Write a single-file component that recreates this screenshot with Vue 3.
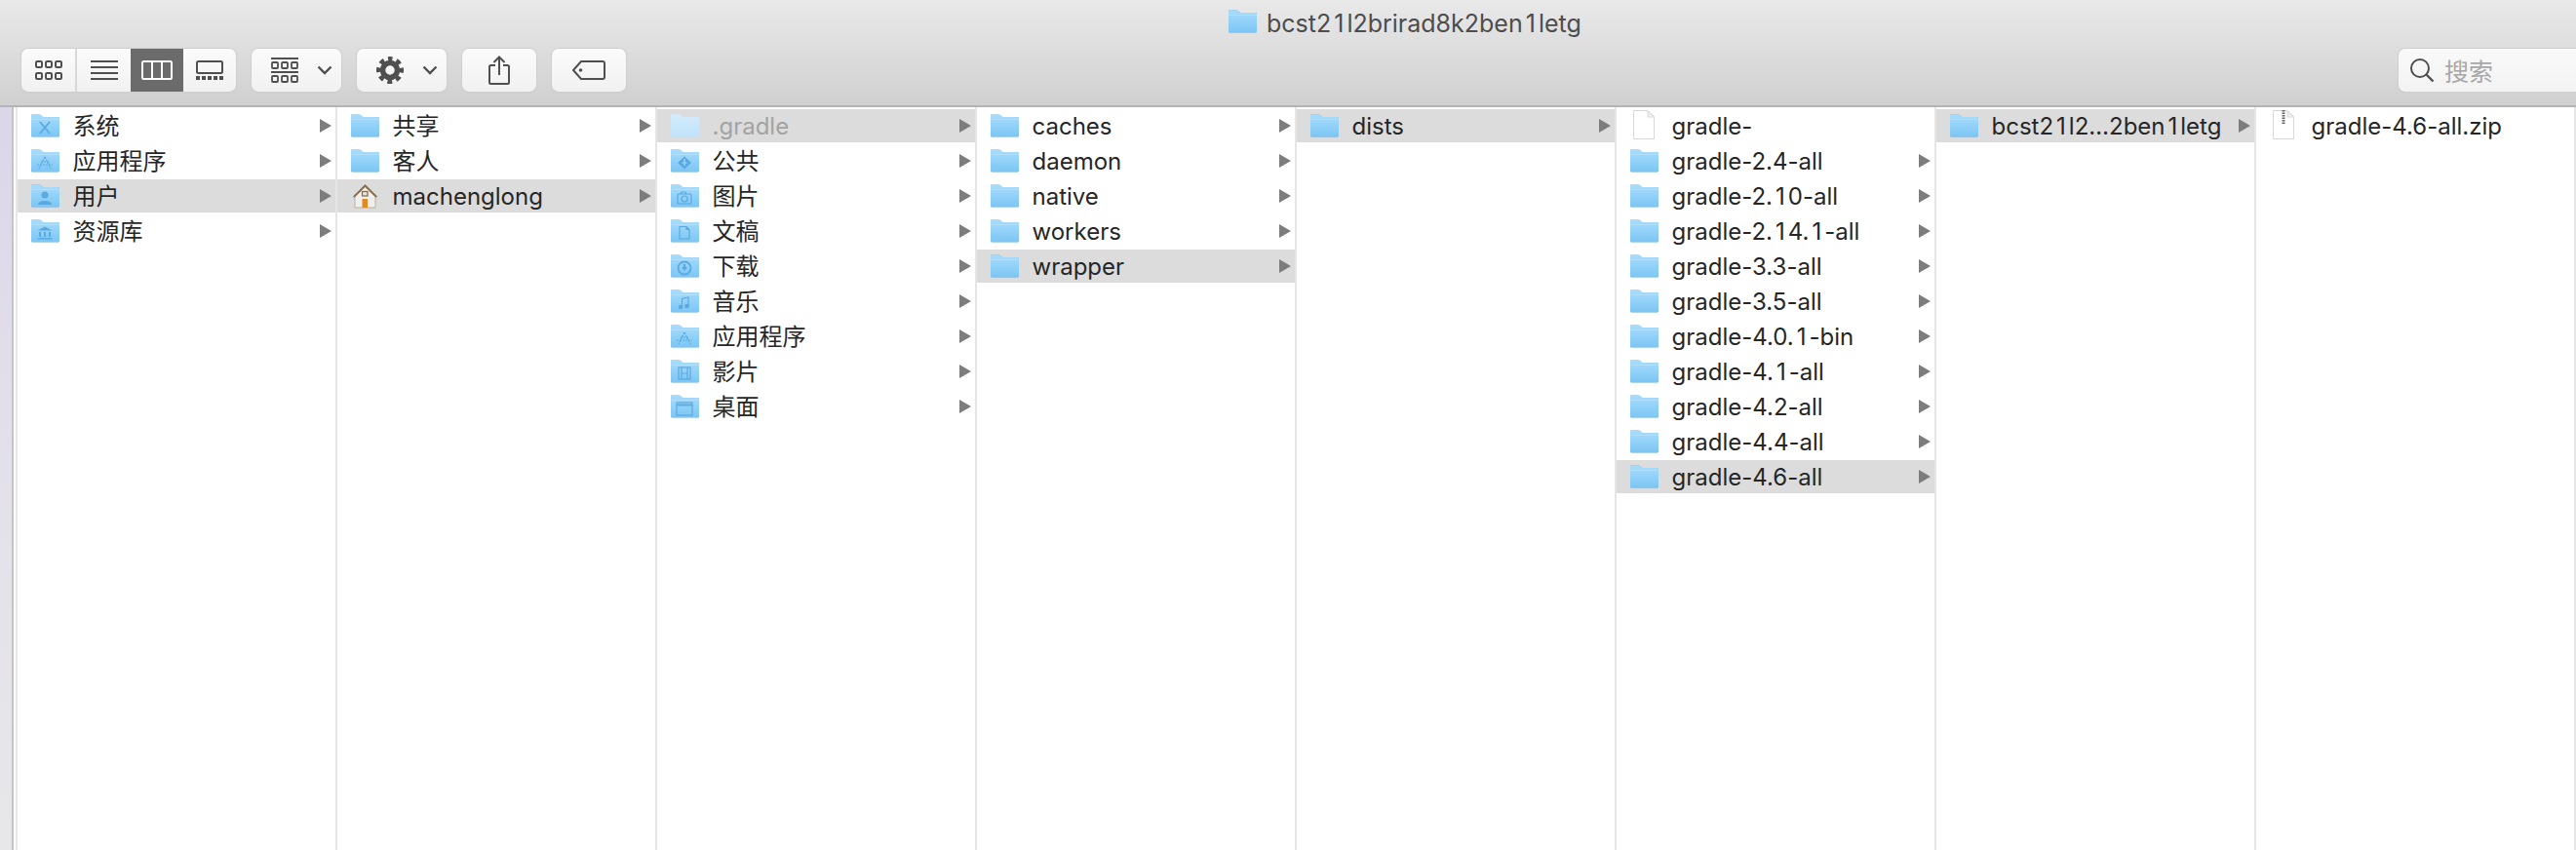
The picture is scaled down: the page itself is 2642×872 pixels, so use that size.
<template>
  <div class="finder">
    <header class="toolbar">
      <div class="title">
        <svg class="title-folder" viewBox="0 0 30 24"><use href="#folder-base" /></svg>
        <span><template v-for="(part, n) in splitOnes('bcst21l2brirad8k2ben1letg')" :key="n"><span :class="{ one: part === '1' }">{{ part }}</span></template></span>
      </div>
      <div class="tools">
        <div class="btn-group">
          <button class="seg seg-icons">
            <svg width="28" height="20" viewBox="0 0 28 20" fill="none" stroke="#4f4f4f" stroke-width="2">
              <rect x="1" y="1" width="6" height="6" rx="1.200" /><rect x="11" y="1" width="6" height="6" rx="1.200" /><rect x="21" y="1" width="6" height="6" rx="1.200" />
              <rect x="1" y="13" width="6" height="6" rx="1.200" /><rect x="11" y="13" width="6" height="6" rx="1.200" /><rect x="21" y="13" width="6" height="6" rx="1.200" />
            </svg>
          </button>
          <button class="seg seg-list">
            <svg width="28" height="20" viewBox="0 0 28 20" fill="#4f4f4f">
              <rect width="28" height="2" /><rect y="6" width="28" height="2" /><rect y="12" width="28" height="2" /><rect y="18" width="28" height="2" />
            </svg>
          </button>
          <button class="seg seg-columns active">
            <svg width="32" height="20" viewBox="0 0 32 20" fill="none" stroke="#fff" stroke-width="2">
              <rect x="1" y="1" width="30" height="18" rx="1.500" /><path d="M11 1v18M21 1v18" />
            </svg>
          </button>
          <button class="seg seg-gallery">
            <svg width="28" height="20" viewBox="0 0 28 20" fill="none" stroke="#4f4f4f" stroke-width="2">
              <rect x="1" y="1" width="26" height="12" rx="1.500" /><path d="M0 18h4M6 18h4M12 18h4M18 18h4M24 18h4" stroke-width="4" />
            </svg>
          </button>
        </div>
        <button class="btn btn-arrange">
          <svg width="28" height="26" viewBox="0 0 28 26" fill="none" stroke="#4f4f4f" stroke-width="1.800">
            <path d="M0 1h28M0 15h28" />
            <rect x="1" y="5" width="6" height="6" rx="1" /><rect x="11" y="5" width="6" height="6" rx="1" /><rect x="21" y="5" width="6" height="6" rx="1" />
            <rect x="1" y="19" width="6" height="6" rx="1" /><rect x="11" y="19" width="6" height="6" rx="1" /><rect x="21" y="19" width="6" height="6" rx="1" />
          </svg>
          <svg class="chev" width="16" height="10" viewBox="0 0 16 10" fill="none" stroke="#4f4f4f" stroke-width="2.400"><path d="M1.500 1.500 8 8l6.500-6.500" /></svg>
        </button>
        <button class="btn btn-action">
          <svg width="28" height="28" viewBox="0 0 28 28" fill="none" stroke="#4f4f4f">
            <circle cx="14" cy="14" r="7.500" stroke-width="5.500" />
            <circle cx="14" cy="14" r="11.500" stroke-width="5" stroke-dasharray="4.800 4.230" stroke-dashoffset="2.400" transform="rotate(-90 14 14)" />
          </svg>
          <svg class="chev" width="16" height="10" viewBox="0 0 16 10" fill="none" stroke="#4f4f4f" stroke-width="2.400"><path d="M1.500 1.500 8 8l6.500-6.500" /></svg>
        </button>
        <button class="btn btn-share">
          <svg width="22" height="30" viewBox="0 0 22 30" fill="none" stroke="#4f4f4f" stroke-width="2">
            <path d="M7 10H2.500A1.500 1.500 0 0 0 1 11.500v16A1.500 1.500 0 0 0 2.500 29h17a1.500 1.500 0 0 0 1.500-1.500v-16a1.500 1.500 0 0 0-1.500-1.500H15" />
            <path d="M11 20V1.500M5.500 7 11 1.500 16.500 7" />
          </svg>
        </button>
        <button class="btn btn-tag">
          <svg width="34" height="20" viewBox="0 0 34 20" fill="none" stroke="#4f4f4f" stroke-width="2">
            <path d="M9 1h22a2 2 0 0 1 2 2v14a2 2 0 0 1-2 2H9l-8-9z" /><circle cx="8.500" cy="10" r="1.800" fill="#4f4f4f" stroke="none" />
          </svg>
        </button>
        <div class="search">
          <svg width="26" height="26" viewBox="0 0 26 26" fill="none" stroke="#4f4f4f" stroke-width="2">
            <circle cx="11" cy="11" r="9" /><path d="m17.500 17.500 7 7" stroke-width="2.400" />
          </svg>
          <span>搜索</span>
        </div>
      </div>
    </header>

    <svg width="0" height="0" class="defs">
      <defs>
        <linearGradient id="folder-fill" x1="0" y1="0" x2="0" y2="1">
          <stop offset="0" stop-color="#a9dcfb" />
          <stop offset="1" stop-color="#7cc6f5" />
        </linearGradient>
        <g id="folder-base">
          <path d="M1 22V1.800C1 .9 1.600.4 2.400.4h7c.6 0 1 .2 1.400.6L13 3h15.500c.9 0 1.500.6 1.500 1.500V22c0 .9-.6 1.500-1.500 1.500h-26C1.600 23.500 1 22.900 1 22z" fill="#5fa9dc" />
          <path d="M1 22V1.800C1 .9 1.600.4 2.400.4h7c.6 0 1 .2 1.400.6L13 3h15.500c.9 0 1.500.6 1.500 1.500V22c0 .4-.1.700-.3.900H1.300C1.100 22.700 1 22.400 1 22z" fill="url(#folder-fill)" />
          <path d="M1 5.400h29" stroke="#b6e2fc" stroke-width=".8" />
        </g>
        <linearGradient id="folder-faded" x1="0" y1="0" x2="0" y2="1">
          <stop offset="0" stop-color="#d3ecfc" />
          <stop offset="1" stop-color="#bfe2fa" />
        </linearGradient>
      </defs>
    </svg>

    <div class="browser">
      <div class="sidebar-strip"></div>
      <section v-for="(col, i) in columns" :key="i" class="column">
        <div v-for="row in col" :key="row.name" class="row" :class="{ selected: row.selected, dimmed: row.dimmed }">
          <svg v-if="row.icon === 'home'" class="icon" viewBox="0 0 30 24">
            <path d="M5 11 15.500 2 26 11v13H5z" fill="#f1efe9" stroke="#a9a59c" stroke-width=".8" />
            <path d="M3 12.500 15.500 0 28 12.500l-1.500 1.300L15.500 3 4.500 13.800z" fill="#8f6c48" />
            <rect x="12.500" y="7.500" width="5.500" height="4.500" fill="#dfe3e6" stroke="#85694c" stroke-width="1.200" />
            <rect x="12.500" y="15" width="5.500" height="9" fill="#e08a23" />
          </svg>
          <svg v-else-if="row.icon === 'file' || row.icon === 'zip'" class="icon" viewBox="0 0 30 24">
            <path d="M4.500 -3.500H19L25.500 3v22.500h-21z" fill="#fff" stroke="#d8d8d8" stroke-width="1" />
            <path d="M19 -3.500V3h6.500z" fill="#f0f0f0" stroke="#d8d8d8" stroke-width="1" />
            <path v-if="row.icon === 'zip'" d="M15 -4v15" stroke="#666" stroke-width="3" stroke-dasharray="1.500 1" />
          </svg>
          <svg v-else-if="row.dimmed" class="icon" viewBox="0 0 30 24">
            <path d="M1 22V1.800C1 .9 1.600.4 2.400.4h7c.6 0 1 .2 1.400.6L13 3h15.500c.9 0 1.500.6 1.500 1.500V22c0 .9-.6 1.500-1.500 1.500h-26C1.600 23.500 1 22.900 1 22z" fill="url(#folder-faded)" />
          </svg>
          <svg v-else class="icon" viewBox="0 0 30 24">
            <use href="#folder-base" />
            <g fill="none" stroke="#5aa9e0" stroke-width="1.200">
              <path v-if="row.icon === 'system'" d="M10 8l10 12M20 8 10 20" stroke-width="1.800" />
              <path v-if="row.icon === 'apps'" d="M15 8l-6 12M15 8l6 12M7 16h16M11 13h8" stroke-dasharray="2 1" />
              <g v-if="row.icon === 'users'" fill="#5aa9e0" stroke="none">
                <circle cx="15" cy="11" r="3.500" /><path d="M8 21c0-3 3-4 7-4s7 1 7 4z" />
              </g>
              <g v-if="row.icon === 'library'" fill="#5aa9e0" stroke="none">
                <path d="M15 7.500 7.500 11.500h15zM9 13h2v5H9zM14 13h2v5h-2zM19 13h2v5h-2zM7.500 19h15v1.500h-15z" />
              </g>
              <g v-if="row.icon === 'public'">
                <path d="M15 7.500 22 14l-7 6.500L8 14z" fill="#5aa9e0" stroke="none" /><path d="M15 10v7M12.500 14h5" stroke="#a5dbfb" />
              </g>
              <g v-if="row.icon === 'pictures'">
                <rect x="8" y="10" width="14" height="10" rx="1" /><circle cx="15" cy="15" r="3" /><path d="M11 10l1-2h4l1 2" />
              </g>
              <path v-if="row.icon === 'docs'" d="M10 7.500h7l3 3V20H10zM17 7.500v3h3" />
              <g v-if="row.icon === 'downloads'">
                <circle cx="15" cy="14" r="6.500" stroke-width="1.800" /><path d="M12 13h6l-3 4z" fill="#5aa9e0" stroke="none" /><path d="M15 10v4" stroke-width="2.400" />
              </g>
              <g v-if="row.icon === 'music'">
                <path d="M12.500 18V9.500l6.500-1.500V17" /><circle cx="11" cy="18" r="1.700" fill="#5aa9e0" /><circle cx="17.500" cy="17" r="1.700" fill="#5aa9e0" />
              </g>
              <g v-if="row.icon === 'movies'">
                <rect x="9" y="8" width="12" height="12" /><path d="M12 8v12M18 8v12M12 14h6" />
              </g>
              <g v-if="row.icon === 'desktop'">
                <rect x="7" y="8" width="16" height="13" /><path d="M7 10.500h16" stroke-width="1.800" />
              </g>
            </g>
          </svg>
          <span class="name" :class="{ cjk: isCjk(row.name) }"><template v-for="(part, n) in splitOnes(row.name)" :key="n"><span :class="{ one: part === '1' }">{{ part }}</span></template></span>
          <span v-if="!row.leaf" class="arrow"></span>
        </div>
      </section>
    </div>
  </div>
</template>

<script setup>
const columns = [
  [
    { name: '系统', icon: 'system' },
    { name: '应用程序', icon: 'apps' },
    { name: '用户', icon: 'users', selected: true },
    { name: '资源库', icon: 'library' },
  ],
  [
    { name: '共享', icon: 'folder' },
    { name: '客人', icon: 'folder' },
    { name: 'machenglong', icon: 'home', selected: true },
  ],
  [
    { name: '.gradle', icon: 'folder', selected: true, dimmed: true },
    { name: '公共', icon: 'public' },
    { name: '图片', icon: 'pictures' },
    { name: '文稿', icon: 'docs' },
    { name: '下载', icon: 'downloads' },
    { name: '音乐', icon: 'music' },
    { name: '应用程序', icon: 'apps' },
    { name: '影片', icon: 'movies' },
    { name: '桌面', icon: 'desktop' },
  ],
  [
    { name: 'caches', icon: 'folder' },
    { name: 'daemon', icon: 'folder' },
    { name: 'native', icon: 'folder' },
    { name: 'workers', icon: 'folder' },
    { name: 'wrapper', icon: 'folder', selected: true },
  ],
  [{ name: 'dists', icon: 'folder', selected: true }],
  [
    { name: 'gradle-', icon: 'file', leaf: true },
    { name: 'gradle-2.4-all', icon: 'folder' },
    { name: 'gradle-2.10-all', icon: 'folder' },
    { name: 'gradle-2.14.1-all', icon: 'folder' },
    { name: 'gradle-3.3-all', icon: 'folder' },
    { name: 'gradle-3.5-all', icon: 'folder' },
    { name: 'gradle-4.0.1-bin', icon: 'folder' },
    { name: 'gradle-4.1-all', icon: 'folder' },
    { name: 'gradle-4.2-all', icon: 'folder' },
    { name: 'gradle-4.4-all', icon: 'folder' },
    { name: 'gradle-4.6-all', icon: 'folder', selected: true },
  ],
  [{ name: 'bcst21l2…2ben1letg', icon: 'folder', selected: true }],
  [{ name: 'gradle-4.6-all.zip', icon: 'zip', leaf: true }],
]

const isCjk = (name) => /[\u4e00-\u9fff]/.test(name)
// the 1 in Inter is narrower than in the original font
const splitOnes = (name) => name.split(/(1)/).filter(Boolean)
</script>

<style>
html,
body {
  margin: 0;
  background: #fff;
  overflow: hidden;
}
</style>

<style scoped>
.finder {
  width: 2642px;
  height: 872px;
  display: flex;
  flex-direction: column;
  font-family: Inter, "Noto Sans CJK SC", sans-serif;
  overflow: hidden;
}

.defs {
  position: absolute;
}

.one {
  padding: 0 3px;
}

/* Toolbar */
.toolbar {
  height: 110px;
  flex: none;
  box-sizing: border-box;
  padding-left: 22px;
  background: linear-gradient(#e9e9e9, #d0d0d0);
  border-bottom: 2px solid #b4b4b4;
}

.title {
  height: 50px;
  display: flex;
  align-items: flex-start;
  gap: 10px;
  padding: 10px 0 0 1237px;
  box-sizing: border-box;
  font-size: 25px;
  line-height: 28px;
  color: #4d4d4d;
}

.title-folder {
  width: 30px;
  height: 24px;
}

.tools {
  display: flex;
  height: 44px;
  gap: 16px;
}

button {
  margin: 0;
  padding: 0;
  border: none;
  font: inherit;
  display: flex;
  align-items: center;
  justify-content: center;
  background: linear-gradient(#fbfbfb, #f1f1f1);
}

.btn-group,
.btn,
.search {
  height: 44px;
  box-sizing: border-box;
  border-radius: 7px;
  box-shadow: 0 0 0 1px #cfcfcf, 0 1px 1px #b5b5b5;
}

.btn-group {
  width: 220px;
  display: flex;
  overflow: hidden;
}

.seg {
  height: 100%;
}

.seg-icons {
  width: 57px;
  border-right: 2px solid #d8d8d8;
}

.seg-list {
  width: 55px;
}

.seg-columns {
  width: 54px;
}

.seg-gallery {
  width: 54px;
}

.active {
  background: #6b6b6b;
}

.btn-arrange,
.btn-action {
  width: 92px;
  gap: 19px;
  justify-content: flex-start;
  padding-left: 20px;
  box-sizing: border-box;
}

.btn-share {
  width: 76px;
}

.btn-tag {
  width: 76px;
}

.search {
  width: 300px;
  margin-left: auto;
  margin-right: -118px;
  display: flex;
  align-items: center;
  gap: 10px;
  padding-left: 11px;
  background: linear-gradient(#f9f9f9, #f3f3f3);
  font-size: 25px;
  color: #a8a8a8;
}

/* Browser columns */
.browser {
  flex: 1;
  display: flex;
  min-height: 0;
}

.sidebar-strip {
  width: 14px;
  flex: none;
  box-sizing: border-box;
  margin-right: 2px;
  background: linear-gradient(#dbd6e8, #e2dfea 40%, #e7e7e9);
  border-right: 2px solid #c4c4c8;
}

.column {
  width: 328px;
  flex: none;
  box-sizing: border-box;
  padding-top: 2px;
  border-right: 2px solid #e6e6e6;
  display: flex;
  flex-direction: column;
  gap: 2px;
}

.column:first-of-type {
  width: 330px;
  border-left: 2px solid #e8e8e8;
}

.row {
  height: 34px;
  flex: none;
  display: flex;
  align-items: center;
  padding-left: 13px;
  font-size: 24px;
  color: #262626;
}

.row.selected {
  background: #dcdcdc;
}

.row.dimmed .name {
  color: #a3a3a3;
}

.icon {
  width: 30px;
  height: 24px;
  flex: none;
  margin-right: 13.500px;
  overflow: visible;
}

.name {
  flex: 1;
  min-width: 0;
  white-space: nowrap;
}

.name.cjk {
  margin-bottom: 3px;
}

.arrow {
  width: 0;
  height: 0;
  margin-right: 4px;
  border-left: 12px solid #7d7d7d;
  border-top: 7px solid transparent;
  border-bottom: 7px solid transparent;
}
</style>
